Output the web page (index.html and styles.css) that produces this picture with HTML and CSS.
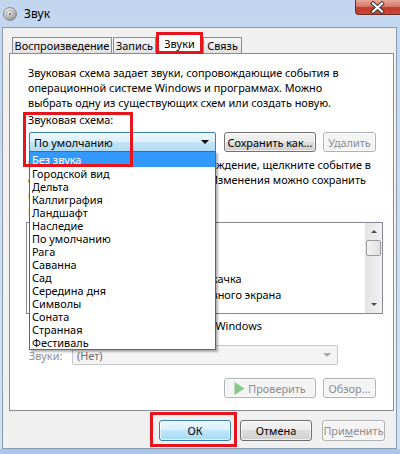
FILE: index.html
```html
<!DOCTYPE html>
<html lang="ru">
<head>
  <meta charset="UTF-8">
  <title>Звук</title>
  <link rel="stylesheet" href="styles.css">
</head>
<body>

  <div class="window">
    <!-- Title bar -->
    <div class="titlebar">
      <svg class="app-icon" width="14" height="14" viewBox="0 0 14 14">
        <defs>
          <radialGradient id="disc" cx="40%" cy="35%" r="70%">
            <stop offset="0" stop-color="#ffffff"/>
            <stop offset="0.6" stop-color="#c4c4c4"/>
            <stop offset="1" stop-color="#7d7d7d"/>
          </radialGradient>
        </defs>
        <circle cx="7" cy="7" r="6.5" fill="url(#disc)" stroke="#8a8a8a" stroke-width="1"/>
        <circle cx="7" cy="7" r="3.5" fill="none" stroke="#a0a0a0" stroke-width="1"/>
        <circle cx="7" cy="7" r="1.5" fill="#8c8c8c"/>
      </svg>
      <span class="title">Звук</span>
      <div class="close-btn">
        <svg width="45" height="15" viewBox="0 0 45 15">
          <path d="M18 3.5 L27 11.5 M27 3.5 L18 11.5" stroke="#3a3a3a" stroke-width="4" stroke-linecap="square"/>
          <path d="M18 3.5 L27 11.5 M27 3.5 L18 11.5" stroke="#ffffff" stroke-width="2" stroke-linecap="square"/>
        </svg>
      </div>
    </div>

    <!-- Client area -->
    <div class="client">
      <div class="tabs">
        <div class="tab tab-play">Воспроизведение</div>
        <div class="tab tab-rec">Запись</div>
        <div class="tab tab-sounds active">Звуки</div>
        <div class="tab tab-comm">Связь</div>
      </div>

      <div class="panel">
        <p class="text intro">Звуковая схема задает звуки, сопровождающие события в<br>операционной системе Windows и программах. Можно<br>выбрать одну из существующих схем или создать новую.</p>

        <div class="text label">Звуковая схема:</div>
        <div class="scheme-row">
          <div class="combo hot">
            <span>По умолчанию</span>
            <span class="arrow"></span>
          </div>
          <ul class="dropdown">
            <li class="selected">Без звука</li>
            <li>Городской вид</li>
            <li>Дельта</li>
            <li>Каллиграфия</li>
            <li>Ландшафт</li>
            <li>Наследие</li>
            <li>По умолчанию</li>
            <li>Рага</li>
            <li>Саванна</li>
            <li>Сад</li>
            <li>Середина дня</li>
            <li>Символы</li>
            <li>Соната</li>
            <li>Странная</li>
            <li>Фестиваль</li>
          </ul>
          <button class="btn btn-save">Сохранить как...</button>
          <button class="btn btn-delete" disabled>Удалить</button>
        </div>

        <p class="text hint">Чтобы назначить звуковое сопровождение, щелкните событие в<br>списке и выберите нужные звуки. Изменения можно сохранить<br>как новую схему.</p>

        <div class="text label">Программные события:</div>
        <div class="events">
          <ul class="event-list">
            <li class="group">Windows</li>
            <li>Восклицание</li>
            <li>Вход в Windows</li>
            <li>Критическое уведомление: подкачка</li>
            <li>Уведомление о блокировке главного экрана</li>
            <li>Уведомление</li>
          </ul>
          <div class="scrollbar">
            <div class="sb-btn"><span class="sb-up"></span></div>
            <div class="sb-track"><div class="sb-thumb"></div></div>
            <div class="sb-btn"><span class="sb-down"></span></div>
          </div>
        </div>

        <div class="check">
          <span class="check-box">✓</span>
          <span>Проигрывать мелодию запуска Windows</span>
        </div>

        <div class="sound-row">
          <span class="dim">Звуки:</span>
          <div class="combo off">
            <span>(Нет)</span>
            <span class="arrow"></span>
          </div>
        </div>

        <div class="test-row">
          <button class="btn btn-test" disabled>
            <svg width="11" height="13" viewBox="0 0 11 13"><path d="M0.5 0 L10.5 6.5 L0.5 13 Z" fill="#86c98a"/></svg>
            Проверить
          </button>
          <button class="btn btn-browse" disabled>Обзор...</button>
        </div>
      </div>

      <div class="footer">
        <button class="btn btn-ok default">ОК</button>
        <button class="btn btn-cancel">Отмена</button>
        <button class="btn btn-apply" disabled>При<u>м</u>енить</button>
      </div>
    </div>

    <!-- Red highlight marks -->
    <div class="mark mark-tab"></div>
    <div class="mark mark-scheme"></div>
    <div class="mark mark-ok"></div>
  </div>

</body>
</html>
```

FILE: styles.css
```css
/* Page and window frame */
body {
  margin: 0;
  background-color: #a9c7e8;
  font-family: "Noto Sans", "Liberation Sans", sans-serif;
  font-size: 10.9px;
  color: #000;
}

.window {
  position: relative;
  width: 400px;
  height: 449px;
  background: linear-gradient(#c2d7ef, #d3e2f3);
}

/* Title bar */
.titlebar {
  display: flex;
  align-items: center;
  height: 27px;
  padding-left: 3px;
}

.title {
  margin-left: 7px;
  font-size: 12px;
}

.close-btn {
  align-self: flex-start;
  margin-left: auto;
  width: 45px;
  height: 15px;
  border: 1px solid #6d2a23;
  border-top: none;
  border-right: none;
  border-radius: 0 0 0 4px;
  background: linear-gradient(#e9a99b 0%, #d47a69 45%, #c0392b 55%, #c94a33 100%);
  box-sizing: border-box;
}

.close-btn svg {
  display: block;
  margin-left: -1px;
}

/* Client area */
.client {
  margin-left: 2px;
  width: 395px;
  height: 422px;
  border: 1px solid #8a9bb0;
  background-color: #f0f0f0;
  box-sizing: border-box;
}

/* Tabs */
.tabs {
  display: flex;
  align-items: flex-end;
  height: 19px;
  margin: 6px 0 0 6px;
  padding-left: 3px;
}

.tab {
  height: 16px;
  line-height: 15px;
  text-align: center;
  white-space: nowrap;
  border: 1px solid #898c95;
  border-bottom: none;
  background: linear-gradient(#f6f6f6, #e1e1e1);
  box-sizing: border-box;
}

.tab-play {
  width: 100px;
}

.tab-rec {
  margin-left: 1px;
  width: 43px;
}

.tab-comm {
  width: 39px;
}

.tab.active {
  position: relative;
  z-index: 1;
  width: 47px;
  height: 20px;
  margin-bottom: -1px;
  padding-top: 1px;
  background: #fff;
}

/* Tab panel */
.panel {
  margin-left: 6px;
  width: 385px;
  height: 358px;
  padding: 11px 10px 0 16px;
  border: 1px solid #898c95;
  background-color: #fff;
  box-sizing: border-box;
}

.text {
  margin: 0 0 0 2px;
  line-height: 15px;
  white-space: nowrap;
}

.label {
  margin-top: 2px;
}

.hint {
  margin-top: 5px;
}

/* Scheme selector row */
.scheme-row {
  position: relative;
  display: flex;
  margin-top: 5px;
  height: 20px;
}

.combo {
  display: flex;
  align-items: center;
  justify-content: space-between;
  height: 20px;
  padding: 0 6px 0 4px;
  border: 1px solid #707070;
  border-radius: 2px;
  box-sizing: border-box;
}

.combo.hot {
  margin-left: 3px;
  width: 187px;
  border-color: #3c7fb1;
  background: linear-gradient(#ecf6fd 0%, #dcf0fc 50%, #c3e4f7 50%, #b2daf3 100%);
}

.arrow {
  width: 0;
  height: 0;
  border-left: 4px solid transparent;
  border-right: 4px solid transparent;
  border-top: 4px solid #000;
}

.combo.off {
  width: 266px;
  border-color: #c5c9cc;
  background-color: #f4f4f4;
  color: #6d6d6d;
}

.combo.off .arrow {
  border-top-color: #a8a8a8;
}

.dropdown {
  position: absolute;
  top: 19px;
  left: 3px;
  z-index: 2;
  width: 187px;
  margin: 0;
  padding: 0;
  list-style: none;
  border: 1px solid #646464;
  background-color: #fff;
  box-shadow: 2px 2px 2px rgba(0, 0, 0, 0.3);
  box-sizing: border-box;
}

.dropdown li {
  height: 13px;
  line-height: 13px;
  padding-left: 2px;
}

.dropdown li.selected {
  height: 15px;
  line-height: 15px;
  background-color: #3399ff;
  color: #fff;
}

/* Buttons */
.btn {
  height: 20px;
  padding: 0;
  font-family: inherit;
  font-size: 10.9px;
  color: #000;
  white-space: nowrap;
  border: 1px solid #707070;
  border-radius: 3px;
  background: linear-gradient(#f2f2f2 0%, #ebebeb 50%, #dddddd 50%, #cfcfcf 100%);
  box-shadow: inset 0 0 0 1px rgba(255, 255, 255, 0.7);
  box-sizing: border-box;
}

.btn:disabled {
  color: #8d8d8d;
  border-color: #adb2b5;
  background: #f4f4f4;
}

.btn.default {
  border-color: #3c7fb1;
  background: linear-gradient(#eaf6fd 0%, #d9f0fc 50%, #bee6fd 50%, #a7d9f5 100%);
}

.btn-save {
  margin-left: 8px;
  width: 92px;
}

.btn-delete {
  margin-left: 7px;
  width: 53px;
}

/* Event list */
.events {
  display: flex;
  margin-top: 3px;
  width: 357px;
  height: 92px;
  border: 1px solid #828790;
  box-sizing: border-box;
}

.event-list {
  flex: 1;
  margin: 0;
  padding: 0;
  list-style: none;
  overflow: hidden;
}

.event-list li {
  height: 16px;
  line-height: 16px;
  padding-left: 18px;
  white-space: nowrap;
}

.event-list li.group {
  padding-left: 6px;
}

.scrollbar {
  display: flex;
  flex-direction: column;
  width: 17px;
  background: linear-gradient(90deg, #e3e3e3, #f2f2f2);
}

.sb-btn {
  display: flex;
  align-items: center;
  justify-content: center;
  height: 17px;
}

.sb-up,
.sb-down {
  width: 0;
  height: 0;
  border-left: 3px solid transparent;
  border-right: 3px solid transparent;
}

.sb-up {
  border-bottom: 3px solid #4d4d4d;
}

.sb-down {
  border-top: 3px solid #4d4d4d;
}

.sb-track {
  flex: 1;
}

.sb-thumb {
  height: 16px;
  margin: 0 1px;
  border: 1px solid #9b9b9b;
  border-radius: 2px;
  background: linear-gradient(90deg, #f3f3f3, #e2e2e2);
  box-sizing: border-box;
}

/* Checkbox */
.check {
  display: flex;
  align-items: center;
  gap: 5px;
  margin: 4px 0 0 3px;
  height: 15px;
  white-space: nowrap;
}

.check-box {
  width: 13px;
  height: 13px;
  border: 1px solid #8f8f8f;
  font-size: 11px;
  line-height: 11px;
  text-align: center;
  box-sizing: border-box;
}

/* Sound selector row */
.sound-row {
  display: flex;
  align-items: center;
  margin-top: 12px;
  padding-left: 3px;
}

.dim {
  width: 43px;
  color: #8d8d8d;
}

/* Test / browse buttons */
.test-row {
  display: flex;
  justify-content: flex-end;
  gap: 7px;
  margin-top: 13px;
  padding-right: 7px;
}

.btn-test {
  display: flex;
  align-items: center;
  justify-content: center;
  gap: 3px;
  width: 92px;
}

.btn-test svg {
  flex: none;
}

.btn-browse {
  width: 53px;
}

/* Dialog footer */
.footer {
  display: flex;
  justify-content: flex-end;
  margin-top: 9px;
  padding-right: 11px;
}

.footer .btn {
  height: 21px;
}

.btn-ok {
  width: 72px;
}

.btn-cancel {
  margin-left: 9px;
  width: 72px;
}

.btn-apply {
  margin-left: 10px;
  width: 63px;
}

/* Red highlight marks */
.mark {
  position: absolute;
  border: 3px solid #e8141c;
  box-sizing: border-box;
}

.mark-tab {
  left: 156px;
  top: 32px;
  width: 47px;
  height: 22px;
  z-index: 3;
}

.mark-scheme {
  left: 23px;
  top: 112px;
  width: 110px;
  height: 55px;
  z-index: 3;
}

.mark-ok {
  left: 150px;
  top: 412px;
  width: 87px;
  height: 35px;
}
```
